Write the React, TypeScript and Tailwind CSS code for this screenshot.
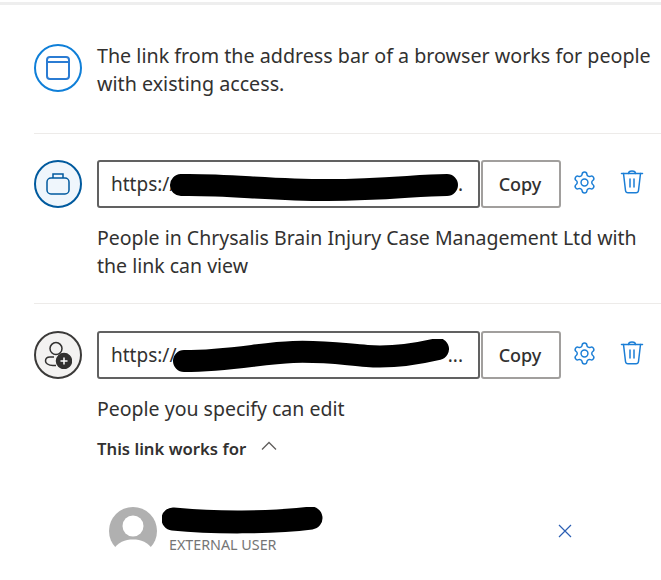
import React from "react";

const font = { fontFamily: '"Noto Sans", "Open Sans", sans-serif' };

function Gear() {
  return (
    <svg width="25" height="25" viewBox="0 0 24 24" fill="none" stroke="#1b7ed6" strokeWidth="1.400" strokeLinecap="round" strokeLinejoin="round">
      <path d="M9.671 4.136a2.340 2.340 0 0 1 4.659 0 2.340 2.340 0 0 0 3.319 1.915 2.340 2.340 0 0 1 2.330 4.033 2.340 2.340 0 0 0 0 3.831 2.340 2.340 0 0 1-2.330 4.033 2.340 2.340 0 0 0-3.319 1.915 2.340 2.340 0 0 1-4.659 0 2.340 2.340 0 0 0-3.320-1.915 2.340 2.340 0 0 1-2.330-4.033 2.340 2.340 0 0 0 0-3.831A2.340 2.340 0 0 1 6.350 6.051a2.340 2.340 0 0 0 3.320-1.915" />
      <circle cx="12" cy="12" r="3.300" />
    </svg>
  );
}

function Trash() {
  return (
    <svg width="24" height="26" viewBox="0 0 24 26" fill="none" stroke="#1b7ed6" strokeWidth="1.500" strokeLinecap="round" strokeLinejoin="round">
      <path d="M1.500 4.500h21" />
      <path d="M8.500 4.500c0-3.500 7-3.500 7 0" />
      <path d="M3.500 4.500 5.500 21.500c.2 1.500 1 2.200 2.500 2.200h8c1.500 0 2.300-.7 2.500-2.200l2-17" />
      <path d="M10 10v8M14 10v8" />
    </svg>
  );
}

function LinkRow({ icon, scribble, tail }: { icon: React.ReactNode; scribble: React.ReactNode; tail: string }) {
  return (
    <div className="flex items-center">
      {icon}
      <div className="relative ml-[15px] flex h-[48px] w-[383px] items-center justify-between overflow-hidden rounded-[3px] border-2 border-[#616161] pl-[12px] pr-[15px] pt-[1px] text-[19px] text-[#323130]">
        <span>https://</span>
        <span>{tail}</span>
        {scribble}
      </div>
      <button className="ml-[1px] h-[48px] w-[80px] rounded-[3px] border-2 border-[#a19f9d] pr-[2px] pt-[1px] text-[18px] font-medium text-[#323130]">Copy</button>
      <div className="mb-[4px] ml-[11px] flex w-[25px] justify-center"><Gear /></div>
      <div className="mb-[4px] ml-[23px] flex w-[24px] justify-center"><Trash /></div>
    </div>
  );
}

export default function App() {
  return (
    <div className="h-[580px] w-[661px] overflow-hidden bg-white text-[#323130]" style={font}>
      <div className="mt-[2px] h-[3px] bg-[#eeeeee]" />
      <div className="pl-[34px] pt-[39px]">
        <div className="flex items-start">
          <div className="flex h-[48px] w-[48px] shrink-0 items-center justify-center rounded-full border-2 border-[#0f7fd8]">
            <div className="flex h-[24px] w-[24px] flex-col rounded-[4px] border-2 border-[#2b7cd3]">
              <div className="mt-[3px] h-[2px] bg-[#2b7cd3]" />
            </div>
          </div>
          <p className="ml-[15px] mt-[-2px] w-[560px] text-[19.700px] leading-[28px]">
            The link from the address bar of a browser works for people with existing access.
          </p>
        </div>
        <div className="mt-[35px] h-[1px] bg-[#edebe9]" />
        <div className="mt-[26px]">
          <LinkRow
            tail="."
            icon={
              <div className="flex h-[48px] w-[48px] shrink-0 items-center justify-center rounded-full border-2 border-[#005a9e] bg-[#eff6fc]">
                <svg width="24" height="24" viewBox="0 0 24 24" fill="none" stroke="#005a9e" strokeWidth="1.500">
                  <rect x="1" y="6" width="22" height="16" rx="4" />
                  <path d="M7 6V2h10v4" />
                </svg>
              </div>
            }
            scribble={
              <svg className="absolute left-[68px] top-[8px]" width="300" height="32" viewBox="0 0 300 32" fill="none">
                <path d="M14 15C60 14 100 20 160 20S250 15 280 15" stroke="#000" strokeWidth="22" strokeLinecap="round" />
              </svg>
            }
          />
          <p className="ml-[63px] mt-[16px] w-[560px] text-[19.500px] leading-[28px]">
            People in Chrysalis Brain Injury Case Management Ltd with the link can view
          </p>
        </div>
        <div className="mt-[23px] h-[1px] bg-[#edebe9]" />
        <div className="mt-[27px]">
          <LinkRow
            tail="..."
            icon={
              <div className="flex h-[48px] w-[48px] shrink-0 items-center justify-center rounded-full border-2 border-[#3b3a39] bg-[#f3f2f1]">
                <svg width="28" height="28" viewBox="0 0 28 28" fill="none" stroke="#323130" strokeWidth="1.500">
                  <circle cx="12" cy="7.600" r="6" />
                  <path d="M10 16H6C3 16 1.500 18 1.500 20S4 24.500 9 24.500H12" />
                  <circle cx="20" cy="20" r="7.500" fill="#323130" />
                  <path d="M20 16.500v7M16.500 20h7" stroke="#ffffff" />
                </svg>
              </div>
            }
            scribble={
              <svg className="absolute left-[72px] top-[6px]" width="290" height="36" viewBox="0 0 290 36" fill="none">
                <path d="M13 22C60 22 90 14 122 13S170 15 196 17S250 14 267 10" stroke="#000" strokeWidth="22" strokeLinecap="round" />
              </svg>
            }
          />
          <p className="ml-[63px] mt-[16px] text-[19.500px] leading-[28px]">People you specify can edit</p>
        </div>
        <div className="ml-[63px] mt-[12px] flex items-center text-[16.700px] font-semibold leading-[28px]">
          <span>This link works for</span>
          <svg className="ml-[15px] mb-[6px]" width="16" height="10" viewBox="0 0 16 10" fill="none" stroke="#605e5c" strokeWidth="1.300">
            <path d="M1 8.500 8 1.500l7 7" />
          </svg>
        </div>
        <div className="ml-[75px] mt-[44px] flex items-center">
          <svg width="48" height="48" viewBox="0 0 48 48" className="shrink-0">
            <circle cx="24" cy="24" r="24" fill="#b0b0b0" />
            <circle cx="24" cy="19" r="10.500" fill="#ffffff" />
            <path d="M4 43C9 35 16 32.500 24 32.500S39 35 44 43V48H4Z" fill="#ffffff" />
          </svg>
          <div className="ml-[12px] w-[160px]">
            <svg className="ml-[-7px]" width="166" height="28" viewBox="0 0 166 28" fill="none">
              <path d="M11 12C50 16 110 16 149 11" stroke="#000" strokeWidth="23" strokeLinecap="round" />
            </svg>
            <div className="text-[14.300px] leading-[20px] text-[#757575]">EXTERNAL USER</div>
          </div>
          <svg className="ml-[229px]" width="14" height="14" viewBox="0 0 14 14" fill="none" stroke="#2b5fb3" strokeWidth="1.200">
            <path d="M1 1l12 12M13 1 1 13" />
          </svg>
        </div>
      </div>
    </div>
  );
}
